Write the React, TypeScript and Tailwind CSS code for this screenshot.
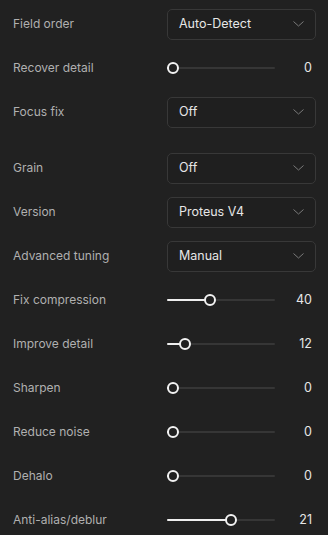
import React from "react";

type Row =
  | { kind: "select"; label: string; value: string; gapBefore?: boolean }
  | { kind: "slider"; label: string; value: number; pct: number };

const rows: Row[] = [
  { kind: "select", label: "Field order", value: "Auto-Detect" },
  { kind: "slider", label: "Recover detail", value: 0, pct: 0 },
  { kind: "select", label: "Focus fix", value: "Off" },
  { kind: "select", label: "Grain", value: "Off", gapBefore: true },
  { kind: "select", label: "Version", value: "Proteus V4" },
  { kind: "select", label: "Advanced tuning", value: "Manual" },
  { kind: "slider", label: "Fix compression", value: 40, pct: 38.5 },
  { kind: "slider", label: "Improve detail", value: 12, pct: 12 },
  { kind: "slider", label: "Sharpen", value: 0, pct: 0 },
  { kind: "slider", label: "Reduce noise", value: 0, pct: 0 },
  { kind: "slider", label: "Dehalo", value: 0, pct: 0 },
  { kind: "slider", label: "Anti-alias/deblur", value: 21, pct: 60 },
];

function Chevron() {
  return (
    <svg width="11" height="6" viewBox="0 0 11 6" fill="none">
      <path d="M0.5 0.5 L5.5 5 L10.5 0.5" stroke="#7a7a7a" strokeWidth="1" />
    </svg>
  );
}

function Select({ value }: { value: string }) {
  return (
    <div className="flex h-[31px] w-[149px] items-center justify-between rounded-[5px] border border-[#383838] bg-[#1f1f1f] pl-[11px] pr-[11px]">
      <span className="text-[12.5px] text-[#e6e6e6]">{value}</span>
      <Chevron />
    </div>
  );
}

function Slider({ value, pct }: { value: number; pct: number }) {
  return (
    <div className="flex w-[145px] items-center">
      <div className="relative h-[12px] w-[108px]">
        <div className="absolute left-0 right-0 top-[5px] h-[2px] rounded bg-[#363636]" />
        <div
          className="absolute left-0 top-[5px] h-[2px] rounded bg-[#eeeeee]"
          style={{ width: `calc(${pct}% * 96 / 108 + 6px)` }}
        />
        <div
          className="absolute top-0 h-[12px] w-[12px] rounded-full border-2 border-[#f2f2f2] bg-[#202020]"
          style={{ left: `calc(${pct}% * 96 / 108)` }}
        />
      </div>
      <span className="ml-auto text-[12.5px] text-[#e6e6e6]">{value}</span>
    </div>
  );
}

export default function App() {
  return (
    <div
      className="flex min-h-[535px] w-[328px] flex-col bg-[#212121] pl-[13px] pr-[12px] pt-[2px]"
      style={{ fontFamily: "Inter, 'Noto Sans', sans-serif" }}
    >
      {rows.map((r) => (
        <div
          key={r.label}
          className={`flex h-[44px] items-center ${r.kind === "select" && r.gapBefore ? "mt-[12px]" : ""}`}
        >
          <div className="w-[154px] shrink-0 text-[12px] text-[#b0b0b0]">{r.label}</div>
          {r.kind === "select" ? (
            <Select value={r.value} />
          ) : (
            <Slider value={r.value} pct={r.pct} />
          )}
        </div>
      ))}
    </div>
  );
}
